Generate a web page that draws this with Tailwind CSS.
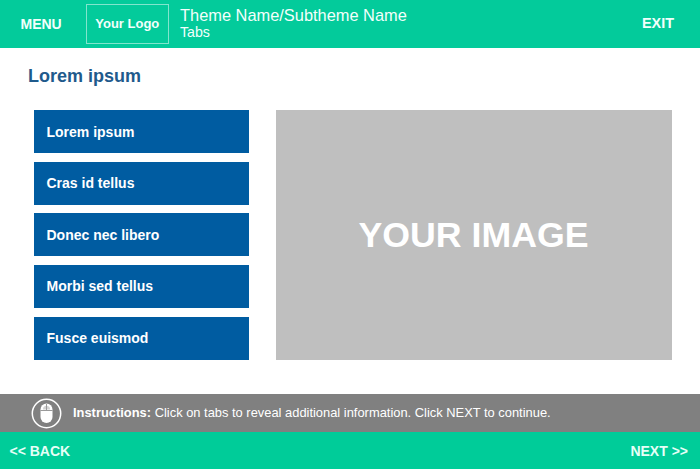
<!DOCTYPE html>
<html lang="en">
<head>
    <meta charset="UTF-8">
    <meta name="viewport" content="width=device-width, initial-scale=1.0">
    <title>Tabs</title>
    <script src="https://cdn.jsdelivr.net/npm/@tailwindcss/browser@4"></script>
</head>
<body class="bg-white font-['Liberation_Sans',Arial,sans-serif] w-[700px] h-[469px] overflow-hidden flex flex-col">
    <!-- header -->
    <header class="h-12 bg-[#03cb9b] text-[#f2fffb] flex items-center shrink-0">
        <div class="w-[86px] pl-[20.5px] text-sm font-bold">MENU</div>
        <div class="w-[82.5px] h-10 border border-white/50 flex items-center justify-center text-[13px] font-bold">Your Logo</div>
        <div class="ml-[11.5px] pb-[2px] flex-1">
            <div class="text-[16.4px] leading-[18px]">Theme Name/Subtheme Name</div>
            <div class="mt-[1px] text-[14.2px] leading-[15px]">Tabs</div>
        </div>
        <div class="pr-[26px] text-[14.4px] font-bold">EXIT</div>
    </header>

    <main class="flex-1">
        <h1 class="pl-7 pt-[18px] text-lg leading-[21px] font-bold text-[#1f5a8c]">Lorem ipsum</h1>
        <div class="flex pl-[33.5px] pt-[23px] gap-[27px]">
            <div class="w-[215.5px] flex flex-col gap-[8.65px]">
                <div class="h-[43px] bg-[#005ca1] text-white text-sm font-bold flex items-center pl-[13px]">Lorem ipsum</div>
                <div class="h-[43px] bg-[#005ca1] text-white text-sm font-bold flex items-center pl-[13px]">Cras id tellus</div>
                <div class="h-[43px] bg-[#005ca1] text-white text-sm font-bold flex items-center pl-[13px]">Donec nec libero</div>
                <div class="h-[43px] bg-[#005ca1] text-white text-sm font-bold flex items-center pl-[13px]">Morbi sed tellus</div>
                <div class="h-[43px] bg-[#005ca1] text-white text-sm font-bold flex items-center pl-[13px]">Fusce euismod</div>
            </div>
            <div class="w-[396px] h-[250px] pt-[2px] pr-[1px] bg-[#bfbfbf] text-white text-[35.7px] font-bold flex items-center justify-center">YOUR IMAGE</div>
        </div>
    </main>

    <!-- instructions -->
    <div class="h-[38px] bg-[#808080] text-white text-[12.9px] flex items-center pl-[30.5px] shrink-0">
        <svg class="w-[31px] h-[31px] shrink-0" viewBox="0 0 31 31" fill="none">
            <circle cx="15.5" cy="15.5" r="14.2" stroke="white" stroke-width="1.5"/>
            <rect x="9.5" y="5.5" width="12" height="19.5" rx="6" fill="white"/>
            <path d="M12 11.5a3.5 3.5 0 0 1 3-3.7v3.7zM16 7.8a3.5 3.5 0 0 1 3 3.7h-3z" fill="#808080" fill-opacity="0.35"/>
            <line x1="15.5" y1="6" x2="15.5" y2="12" stroke="#808080" stroke-width="0.8"/>
            <line x1="9.5" y1="12.5" x2="21.5" y2="12.5" stroke="#808080" stroke-width="0.8"/>
        </svg>
        <div class="ml-[11.5px]"><span class="font-bold">Instructions:</span> Click on tabs to reveal additional information. Click NEXT to continue.</div>
    </div>

    <!-- footer -->
    <footer class="h-[37px] bg-[#00cc99] text-[#e6fff7] text-sm font-bold flex items-center justify-between pl-[9.5px] pr-[12px] shrink-0">
        <div>&lt;&lt; BACK</div>
        <div>NEXT &gt;&gt;</div>
    </footer>
</body>
</html>
